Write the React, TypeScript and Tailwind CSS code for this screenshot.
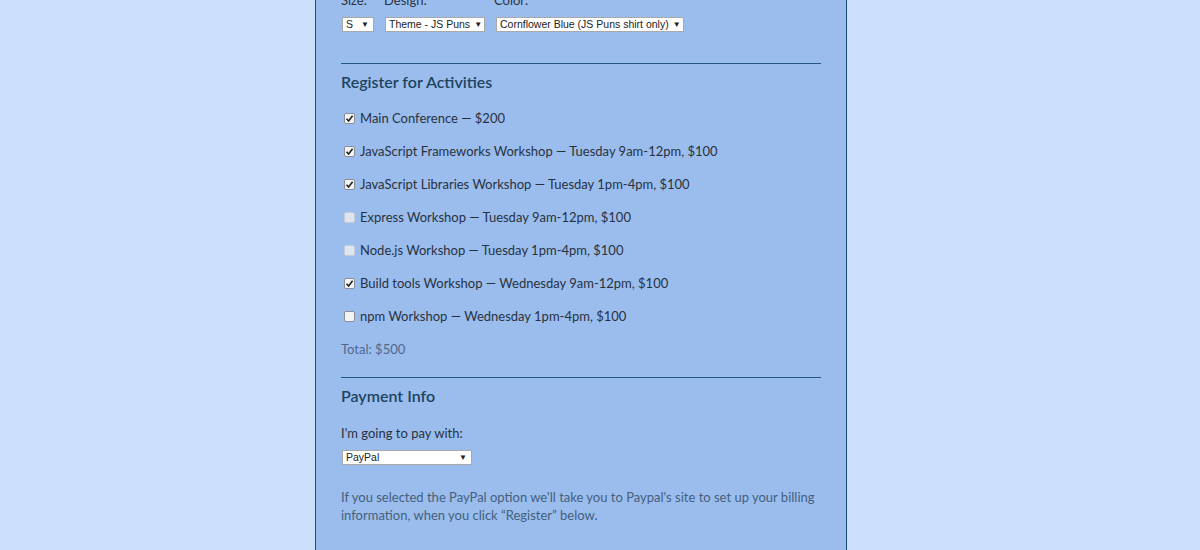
import React from "react";

type Activity = {
	label: string;
	checked: boolean;
	disabled?: boolean;
};

const activities: Activity[] = [
	{ label: "Main Conference — $200", checked: true },
	{ label: "JavaScript Frameworks Workshop — Tuesday 9am-12pm, $100", checked: true },
	{ label: "JavaScript Libraries Workshop — Tuesday 1pm-4pm, $100", checked: true },
	{ label: "Express Workshop — Tuesday 9am-12pm, $100", checked: false, disabled: true },
	{ label: "Node.js Workshop — Tuesday 1pm-4pm, $100", checked: false, disabled: true },
	{ label: "Build tools Workshop — Wednesday 9am-12pm, $100", checked: true },
	{ label: "npm Workshop — Wednesday 1pm-4pm, $100", checked: false },
];

const FakeSelect = ({ value, width }: { value: string; width: string }) => (
	<div
		className={`${width} h-[15px] bg-white border border-[#a9a9a9] flex items-center justify-between pl-[3px] pr-[4px] text-[10.5px] leading-none text-[#222] font-['Liberation_Sans',Arial,sans-serif]`}
	>
		<span className="whitespace-nowrap">{value}</span>
		<span className="text-[8px] ml-[4px]">▼</span>
	</div>
);

const Checkbox = ({ checked, disabled }: { checked: boolean; disabled?: boolean }) => (
	<span
		className={`w-[11px] h-[11px] mx-[3px] shrink-0 rounded-[2px] border flex items-center justify-center ${
			disabled ? "bg-[#dfe5ee] border-[#c3ccd8]" : "bg-[#f4f4f4] border-[#8a8f96]"
		}`}
	>
		{checked && (
			<svg width="9" height="9" viewBox="0 0 9 9">
				<path d="M1.5 4.8 L3.6 7 L7.6 1.8" fill="none" stroke="#222" strokeWidth="1.6" />
			</svg>
		)}
	</span>
);

export default function App() {
	return (
		<div className="h-[550px] overflow-hidden bg-[#cadff9] font-['Lato','Noto_Sans',sans-serif]">
			<div className="ml-[315px] w-[532px] h-[550px] bg-[#9bbdee] border-x border-[#1e4d73] px-[25px] flex flex-col">
				<div className="flex flex-col mt-[-8px]">
					<div className="flex h-[16px] text-[13px] leading-[16px] text-[#2a3440]">
						<span className="w-[43px]">Size:</span>
						<span className="w-[110px]">Design:</span>
						<span>Color:</span>
					</div>
					<div className="flex gap-[11px] mt-[9px] pl-[1px]">
						<FakeSelect value="S" width="w-[32px]" />
						<FakeSelect value="Theme - JS Puns" width="w-[100px]" />
						<FakeSelect value="Cornflower Blue (JS Puns shirt only)" width="w-[188px]" />
					</div>

					<div className="mt-[31px] border-t border-[#1f5a7c]" />
					<h2 className="mt-[6px] h-[24px] leading-[24px] text-[16px] font-semibold text-[#1d4460]">Register for Activities</h2>

					<div className="mt-[8px] flex flex-col">
						{activities.map((a) => (
							<label key={a.label} className="h-[33px] flex items-center gap-[2px] text-[13px] text-[#28323e]">
								<Checkbox checked={a.checked} disabled={a.disabled} />
								<span>{a.label}</span>
							</label>
						))}
						<div className="h-[33px] flex items-center text-[13px] text-[#50688a]">Total: $500</div>
					</div>

					<div className="mt-[11px] border-t border-[#1f5a7c]" />
					<h2 className="mt-[6px] h-[24px] leading-[24px] text-[16px] font-semibold text-[#1d4460]">Payment Info</h2>

					<p className="mt-[15px] h-[20px] leading-[20px] text-[13px] text-[#28323e]">I'm going to pay with:</p>
					<div className="mt-[7px] pl-[1px]">
						<FakeSelect value="PayPal" width="w-[130px]" />
					</div>

					<p className="mt-[23px] text-[13px] leading-[18px] text-[#44607c]">
						If you selected the PayPal option we'll take you to Paypal's site to set up your billing information,
						when you click “Register” below.
					</p>
				</div>
			</div>
		</div>
	);
}
